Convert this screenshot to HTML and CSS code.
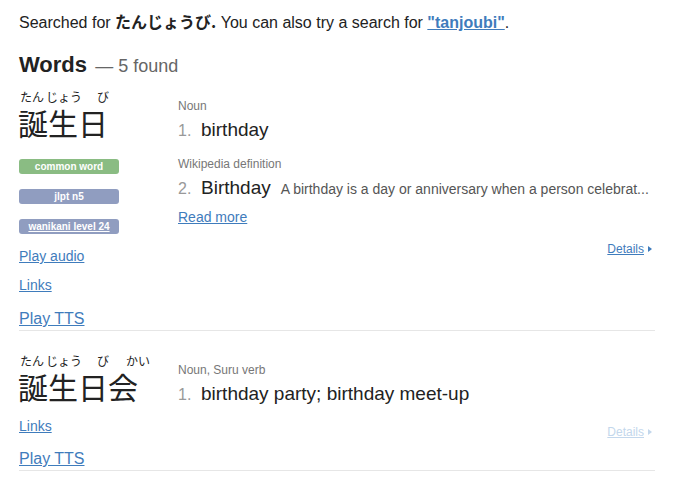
FILE: index.html
```html
<!DOCTYPE html>
<html lang="ja">
<head>
<meta charset="utf-8">
<link rel="stylesheet" href="styles.css">
</head>
<body>
<div class="page">
  <p class="search-note">Searched for <strong class="jp">たんじょうび.</strong> You can also try a search for <a class="alt-search" href="#">"tanjoubi"</a>.</p>
  <h2 class="section-title">Words <span class="count">— 5 found</span></h2>

  <div class="entry">
    <div class="entry-left">
      <div class="furigana">
        <span class="f1">たん</span><span class="f2">じょう</span><span class="f3">び</span>
      </div>
      <div class="kanji">誕生日</div>
      <div class="tags">
        <span class="tag tag-common">common word</span>
        <span class="tag tag-blue">jlpt n5</span>
        <a class="tag tag-blue tag-link" href="#">wanikani level 24</a>
      </div>
      <a class="side-link audio" href="#">Play audio</a>
      <a class="side-link links" href="#">Links</a>
      <a class="side-link tts" href="#">Play TTS</a>
    </div>
    <div class="entry-right">
      <div class="pos">Noun</div>
      <div class="meaning"><span class="num">1.</span><span class="mtext">birthday</span></div>
      <div class="pos pos-wiki">Wikipedia definition</div>
      <div class="meaning"><span class="num">2.</span><span class="mtext">Birthday</span><span class="abstract">A birthday is a day or anniversary when a person celebrat...</span></div>
      <a class="read-more" href="#">Read more</a>
      <div class="details-row details-first"><a class="details" href="#">Details<span class="arrow"></span></a></div>
    </div>
  </div>

  <div class="entry">
    <div class="entry-left">
      <div class="furigana">
        <span class="f1">たん</span><span class="f2">じょう</span><span class="f3">び</span><span class="f4">かい</span>
      </div>
      <div class="kanji">誕生日会</div>
      <a class="side-link links-2" href="#">Links</a>
      <a class="side-link tts tts-2" href="#">Play TTS</a>
    </div>
    <div class="entry-right">
      <div class="pos">Noun, Suru verb</div>
      <div class="meaning"><span class="num">1.</span><span class="mtext">birthday party; birthday meet-up</span></div>
      <div class="details-row details-second"><a class="details faded" href="#">Details<span class="arrow"></span></a></div>
    </div>
  </div>
</div>
</body>
</html>
```

FILE: styles.css
```css
* { box-sizing: border-box; }
html, body { margin: 0; padding: 0; background: #fff; }
body {
  font-family: "Liberation Sans", Arial, "Noto Sans CJK JP", sans-serif;
  color: #222;
}
a { color: #3f7cbc; }
.page { padding: 11px 23px 0 19px; }

.search-note {
  margin: 0;
  font-size: 16px;
  line-height: 20px;
}
.search-note .jp { font-family: "Noto Sans CJK JP", sans-serif; font-weight: 700; }
.alt-search { font-weight: 700; }

.section-title {
  margin: 19px 0 -12px;
  font-size: 22px;
  line-height: 26px;
  font-weight: 700;
}
.section-title .count {
  font-weight: 400;
  font-size: 18px;
  color: #666;
  margin-left: 2px;
}

.entry {
  display: flex;
  padding-top: 22px;
  border-bottom: 1px solid #e6e6e6;
}
.entry-left {
  width: 159px;
  display: flex;
  flex-direction: column;
  align-items: flex-start;
}
.entry-right { flex: 1; display: flex; flex-direction: column; align-items: flex-start; }

.furigana {
  display: flex;
  font-family: "Noto Sans CJK JP", sans-serif;
  font-size: 12px;
  line-height: 14px;
  margin-top: 1px;
  white-space: nowrap;
}
.furigana span { display: block; }
.f1 { width: 27px; padding-left: 1px; }
.f2 { width: 51px; }
.f3 { width: 28px; }
.f4 { width: 30px; padding-left: 1px; }

.kanji {
  font-family: "Noto Sans CJK JP", sans-serif;
  font-size: 30px;
  line-height: 32px;
  color: #222;
  margin-top: 2px;
  margin-left: -1px;
}

.tags { display: flex; flex-direction: column; gap: 15px; margin-top: 21px; }
.tag {
  display: block;
  width: 100px;
  height: 15px;
  border-radius: 3px;
  color: #fff;
  font-size: 10px;
  font-weight: 700;
  line-height: 15px;
  text-align: center;
}
.tag-common { background: #8abc83; }
.tag-blue { background: #909dc0; }
.tag-link { text-decoration: underline; }

.side-link { display: block; font-size: 14px; line-height: 18px; }
.audio { margin-top: 13px; }
.links { margin-top: 11px; }
.links-2 { margin-top: 15px; }
.tts { margin-top: 15px; font-size: 16px; line-height: 20px; margin-bottom: 1px; }
.tts-2 { margin-top: 14px; }

.pos {
  font-size: 12px;
  line-height: 14px;
  color: #777;
  margin-top: 10px;
}
.pos-wiki { margin-top: 15px; }
.meaning {
  margin-top: 5px;
  display: flex;
  align-items: baseline;
  white-space: nowrap;
}
.num { color: #999; font-size: 16px; width: 23px; }
.mtext { font-size: 19px; line-height: 24px; color: #222; }
.abstract { font-size: 14px; color: #555; margin-left: 10px; }
.read-more { font-size: 14px; line-height: 18px; margin-top: 8px; }

.details-row { align-self: stretch; display: flex; justify-content: flex-end; }
.details-first { margin-top: 16px; }
.details-second { margin-top: 19px; }
.details {
  font-size: 12px;
  line-height: 14px;
  display: inline-flex;
  align-items: center;
  margin-right: 3px;
}
.details .arrow {
  display: inline-block;
  width: 0; height: 0;
  border-top: 3.5px solid transparent;
  border-bottom: 3.5px solid transparent;
  border-left: 4px solid currentColor;
  margin-left: 4px;
}
.details.faded { color: #c3d7ec; }
```
